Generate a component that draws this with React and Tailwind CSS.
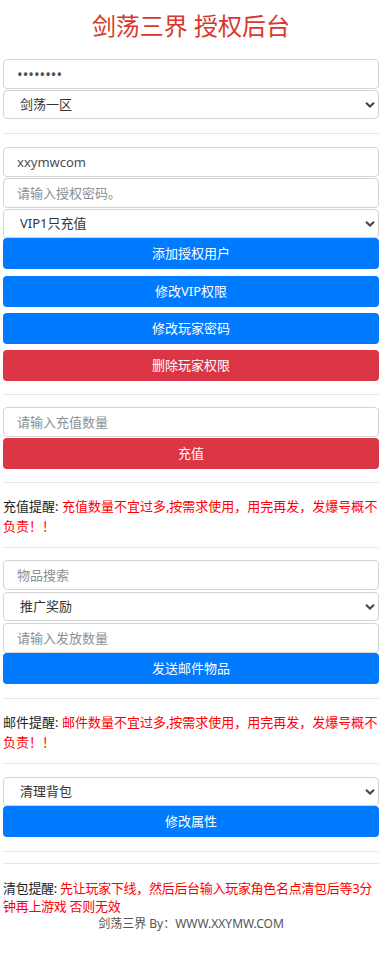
import React from 'react';

const Chevron = () => (
    <svg className="pointer-events-none absolute right-[4px] top-1/2 -translate-y-1/2" width="10" height="7" viewBox="0 0 10 7">
        <path d="M1 1.2 L5 5 L9 1.2" fill="none" stroke="#444" strokeWidth="2" />
    </svg>
);

const Input = ({ placeholder, value, type = 'text', className = '' }) => (
    <input
        type={type}
        defaultValue={value}
        placeholder={placeholder}
        className={`block w-full h-[30px] px-[13px] text-[13px] text-[#495057] placeholder-[#8a9096] bg-white border border-[#d4d4d4] rounded-[4px] outline-none ${className}`}
    />
);

const Select = ({ options, className = '' }) => (
    <div className={`relative ${className}`}>
        <select className="block w-full h-[29px] pl-[16px] pr-6 text-[13px] text-[#333] bg-white border border-[#d4d4d4] rounded-[4px] appearance-none outline-none">
            {options.map((o) => (
                <option key={o}>{o}</option>
            ))}
        </select>
        <Chevron />
    </div>
);

const Btn = ({ children, red, className = '' }) => (
    <button
        className={`block w-full h-[31px] text-[13px] text-white rounded-[4px] ${red ? 'bg-[#dc3545]' : 'bg-[#007bff]'} ${className}`}
    >
        {children}
    </button>
);

const Hr = ({ className = '' }) => <hr className={`border-0 border-t border-[#e6e6e6] ${className}`} />;

const Notice = ({ label, children, className = '' }) => (
    <p className={`text-[13px] leading-[20px] text-[#ff0000] ${className}`}>
        <span className="text-[#212529]">{label}: </span>
        {children}
    </p>
);

export default function App() {
    return (
        <div className="min-h-screen bg-white px-[3px]" style={{ fontFamily: '"Noto Sans", "Noto Sans CJK SC", sans-serif' }}>
            <h1 className="pt-[10px] mb-[17px] text-center text-[24px] leading-[32px] text-[#d9372c]">剑荡三界 授权后台</h1>

            <Input type="password" value="12345678" className="text-[15px]" />
            <Select options={['剑荡一区']} className="mt-[1px]" />

            <Hr className="mt-[14px] mb-[13px]" />

            <Input value="xxymwcom" />
            <Input placeholder="请输入授权密码。" className="mt-[1px]" />
            <Select options={['VIP1只充值']} className="mt-[1px]" />
            <Btn>添加授权用户</Btn>
            <Btn className="mt-[7px]">修改VIP权限</Btn>
            <Btn className="mt-[6px]">修改玩家密码</Btn>
            <Btn red className="mt-[6px]">删除玩家权限</Btn>

            <Hr className="mt-[13px] mb-[12px]" />

            <Input placeholder="请输入充值数量" />
            <Btn red className="mt-[1px]">充值</Btn>

            <Hr className="mt-[13px] mb-[13px]" />

            <Notice label="充值提醒">充值数量不宜过多,按需求使用，用完再发，发爆号概不负责！！</Notice>

            <Hr className="mt-[11px] mb-[12px]" />

            <Input placeholder="物品搜索" />
            <Select options={['推广奖励']} className="mt-[2px]" />
            <Input placeholder="请输入发放数量" className="mt-[2px]" />
            <Btn>发送邮件物品</Btn>

            <Hr className="mt-[14px] mb-[13px]" />

            <Notice label="邮件提醒">邮件数量不宜过多,按需求使用，用完再发，发爆号概不负责！！</Notice>

            <Hr className="mt-[11px] mb-[13px]" />

            <Select options={['清理背包']} />
            <Btn>修改属性</Btn>

            <Hr className="mt-[14px]" />
            <Hr className="mt-[11px] mb-[15px]" />

            <p className="text-[13px] leading-[18px] tracking-[-0.3px] text-[#ff0000]">
                <span className="text-[#212529]">清包提醒: </span>
                先让玩家下线，然后后台输入玩家角色名点清包后等3分钟再上游戏 否则无效
            </p>
            <p className="text-center text-[12px] leading-[18px] text-[#555]">剑荡三界 By：WWW.XXYMW.COM</p>
        </div>
    );
}
